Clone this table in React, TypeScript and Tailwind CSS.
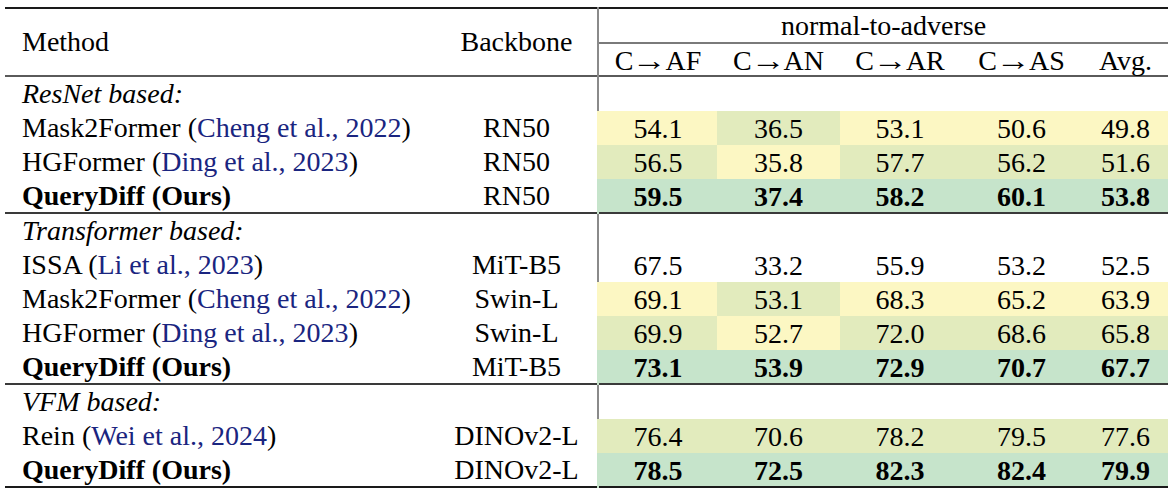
import React from 'react';

type Cite = { name: string; cite?: string; bold?: boolean };
type Row = { method: Cite; backbone: string; values: string[]; colors?: string[]; bold?: boolean };
type Section = { title: string; rows: Row[] };

const Y = 'bg-[#fcf7c3]';
const G = 'bg-[#e2ebbd]';
const M = 'bg-[#c6e4cb]';

const sections: Section[] = [
  {
    title: 'ResNet based:',
    rows: [
      {
        method: { name: 'Mask2Former', cite: 'Cheng et al., 2022' },
        backbone: 'RN50',
        values: ['54.1', '36.5', '53.1', '50.6', '49.8'],
        colors: [Y, G, Y, Y, Y],
      },
      {
        method: { name: 'HGFormer', cite: 'Ding et al., 2023' },
        backbone: 'RN50',
        values: ['56.5', '35.8', '57.7', '56.2', '51.6'],
        colors: [G, Y, G, G, G],
      },
      {
        method: { name: 'QueryDiff (Ours)', bold: true },
        backbone: 'RN50',
        values: ['59.5', '37.4', '58.2', '60.1', '53.8'],
        colors: [M, M, M, M, M],
        bold: true,
      },
    ],
  },
  {
    title: 'Transformer based:',
    rows: [
      {
        method: { name: 'ISSA', cite: 'Li et al., 2023' },
        backbone: 'MiT-B5',
        values: ['67.5', '33.2', '55.9', '53.2', '52.5'],
      },
      {
        method: { name: 'Mask2Former', cite: 'Cheng et al., 2022' },
        backbone: 'Swin-L',
        values: ['69.1', '53.1', '68.3', '65.2', '63.9'],
        colors: [Y, G, Y, Y, Y],
      },
      {
        method: { name: 'HGFormer', cite: 'Ding et al., 2023' },
        backbone: 'Swin-L',
        values: ['69.9', '52.7', '72.0', '68.6', '65.8'],
        colors: [G, Y, G, G, G],
      },
      {
        method: { name: 'QueryDiff (Ours)', bold: true },
        backbone: 'MiT-B5',
        values: ['73.1', '53.9', '72.9', '70.7', '67.7'],
        colors: [M, M, M, M, M],
        bold: true,
      },
    ],
  },
  {
    title: 'VFM based:',
    rows: [
      {
        method: { name: 'Rein', cite: 'Wei et al., 2024' },
        backbone: 'DINOv2-L',
        values: ['76.4', '70.6', '78.2', '79.5', '77.6'],
        colors: [G, G, G, G, G],
      },
      {
        method: { name: 'QueryDiff (Ours)', bold: true },
        backbone: 'DINOv2-L',
        values: ['78.5', '72.5', '82.3', '82.4', '79.9'],
        colors: [M, M, M, M, M],
        bold: true,
      },
    ],
  },
];

const backboneBorder: Record<string, string> = {
  [Y]: 'border-r-[#fcf7c3]',
  [G]: 'border-r-[#e2ebbd]',
  [M]: 'border-r-[#c6e4cb]',
};

const MethodCell = ({ m }: { m: Cite }) => (
  <td className={`pl-[17px] text-left whitespace-nowrap ${m.bold ? 'font-bold' : ''}`}>
    {m.name}
    {m.cite ? (
      <>
        {' ('}
        <span className="text-[#1a2580]">{m.cite}</span>
        {')'}
      </>
    ) : null}
  </td>
);

export default function App() {
  return (
    <div className="h-[498px] w-full overflow-hidden bg-white pt-[7px] pl-[5px] text-[28px] leading-none text-black [font-family:'Liberation_Serif','Times_New_Roman',serif]">
      <table className="w-[1163px] table-fixed border-collapse border-t-2 border-b-2 border-t-[#1a1a1a] border-b-[#1a1a1a]">
        <colgroup>
          <col className="w-[431px]" />
          <col className="w-[162px]" />
          <col className="w-[119px]" />
          <col className="w-[123px]" />
          <col className="w-[120px]" />
          <col className="w-[123px]" />
          <col className="w-[85px]" />
        </colgroup>
        <thead>
          <tr className="h-[35px]">
            <th rowSpan={2} className="pl-[17px] text-left font-normal">
              Method
            </th>
            <th rowSpan={2} className="border-r-2 border-r-[#8a8a8a] text-center font-normal">
              Backbone
            </th>
            <th colSpan={5} className="border-b-2 border-b-[#7a7a7a] pt-[1px] text-center font-normal">
              normal-to-adverse
            </th>
          </tr>
          <tr className="h-[33px] border-b-2 border-b-[#5a5a5a]">
            {['AF', 'AN', 'AR', 'AS'].map((h) => (
              <th key={h} className="pt-[2px] text-center font-normal whitespace-nowrap">
                C<span className="inline-block scale-x-[1.25] px-[2px]">→</span>
                {h}
              </th>
            ))}
            <th className="pt-[2px] text-center font-normal">Avg.</th>
          </tr>
        </thead>
        {sections.map((s, si) => (
          <tbody key={s.title} className={si > 0 ? 'border-t-2 border-t-[#3a3a3a]' : ''}>
            <tr className="h-[35px]">
              <td className="pl-[17px] text-left italic">{s.title}</td>
              <td className="border-r-2 border-r-[#8a8a8a]" />
              <td colSpan={5} />
            </tr>
            {s.rows.map((r, ri) => (
              <tr key={ri} className="h-[34px]">
                <MethodCell m={r.method} />
                <td
                  className={`border-r-2 text-center ${
                    r.colors ? backboneBorder[r.colors[0]] : 'border-r-[#8a8a8a]'
                  }`}
                >
                  {r.backbone}
                </td>
                {r.values.map((v, vi) => (
                  <td
                    key={vi}
                    className={`pt-[2px] text-center ${r.colors ? r.colors[vi] : ''} ${r.bold ? 'font-bold' : ''}`}
                  >
                    {v}
                  </td>
                ))}
              </tr>
            ))}
          </tbody>
        ))}
      </table>
    </div>
  );
}
